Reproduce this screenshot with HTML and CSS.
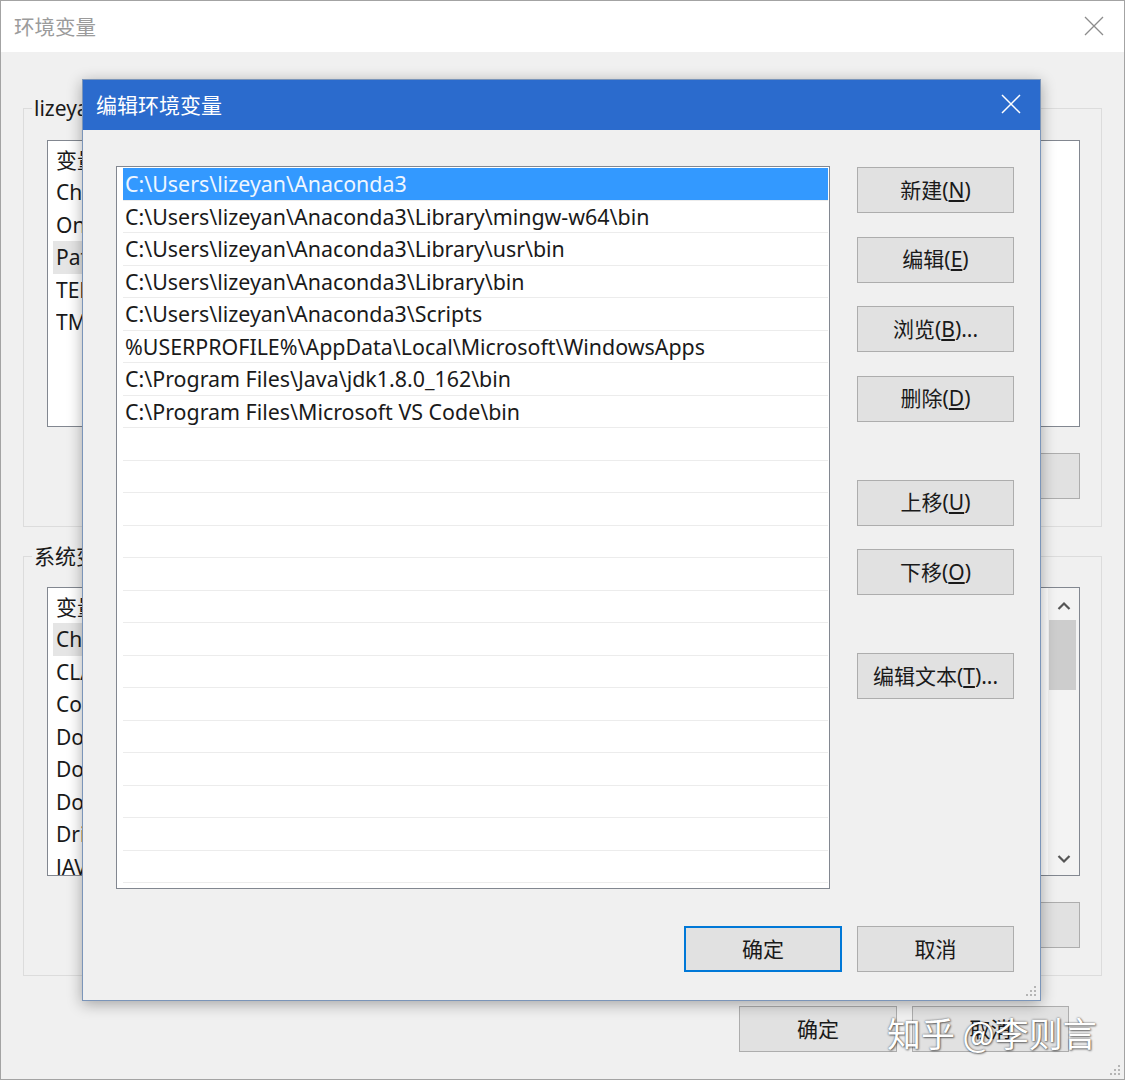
FILE: index.html
```html
<!DOCTYPE html>
<html lang="zh-CN">
<head>
<meta charset="utf-8">
<title>编辑环境变量</title>
<link rel="stylesheet" href="styles.css">
</head>
<body>
<div class="win">
  <div class="win-title">
    <span>环境变量</span>
    <svg class="x-icon" width="20" height="20" viewBox="0 0 20 20"><path d="M1 1 L19 19 M19 1 L1 19" stroke="#8c8c8c" stroke-width="1.3" fill="none"/></svg>
  </div>
  <div class="win-body">
    <fieldset class="group g1">
      <legend>lizeyan 的用户变量(U)</legend>
      <div class="lv lv1">
        <div class="lv-items">
          <div class="lv-head"><span class="c1">变量</span><span>值</span></div>
          <div class="lv-row"><span class="c1">ChocolateyLastPathUpdate</span><span>132234567890123456</span></div>
          <div class="lv-row"><span class="c1">OneDrive</span><span>C:\Users\lizeyan\OneDrive</span></div>
          <div class="lv-row hl"><span class="c1">Path</span><span>C:\Users\lizeyan\Anaconda3;C:\Users\lizeyan\...</span></div>
          <div class="lv-row"><span class="c1">TEMP</span><span>%USERPROFILE%\AppData\Local\Temp</span></div>
          <div class="lv-row"><span class="c1">TMP</span><span>%USERPROFILE%\AppData\Local\Temp</span></div>
        </div>
      </div>
      <div class="btnrow">
        <button class="btn">新建(<u>N</u>)...</button>
        <button class="btn">编辑(<u>E</u>)...</button>
        <button class="btn">删除(<u>D</u>)</button>
      </div>
    </fieldset>
    <fieldset class="group g2">
      <legend>系统变量(S)</legend>
      <div class="lv lv2">
        <div class="lv-items">
          <div class="lv-head"><span class="c1">变量</span><span>值</span></div>
          <div class="lv-row hl"><span class="c1">ChocolateyInstall</span><span>C:\ProgramData\chocolatey</span></div>
          <div class="lv-row"><span class="c1">CLASSPATH</span><span>.;%JAVA_HOME%\lib</span></div>
          <div class="lv-row"><span class="c1">ComSpec</span><span>C:\WINDOWS\system32\cmd.exe</span></div>
          <div class="lv-row"><span class="c1">DokanLibrary1</span><span>C:\Program Files\Dokan\</span></div>
          <div class="lv-row"><span class="c1">DokanLibrary1_LibraryPath_x64</span><span>C:\Program Files\Dokan\</span></div>
          <div class="lv-row"><span class="c1">DokanLibrary1_LibraryPath_x86</span><span>C:\Program Files (x86)\</span></div>
          <div class="lv-row"><span class="c1">DriverData</span><span>C:\Windows\System32\Drivers</span></div>
          <div class="lv-row"><span class="c1">JAVA_HOME</span><span>C:\Program Files\Java\jdk1.8.0_162</span></div>
        </div>
        <div class="vscroll">
          <div class="arrow up"><svg width="14" height="10" viewBox="0 0 14 10"><path d="M1.5 8 L7 2.5 L12.5 8" stroke="#555" stroke-width="2.2" fill="none"/></svg></div>
          <div class="thumb"></div>
          <div class="track"></div>
          <div class="arrow"><svg width="14" height="10" viewBox="0 0 14 10"><path d="M1.5 2 L7 7.5 L12.5 2" stroke="#555" stroke-width="2.2" fill="none"/></svg></div>
        </div>
      </div>
      <div class="btnrow">
        <button class="btn">新建(<u>W</u>)...</button>
        <button class="btn">编辑(<u>I</u>)...</button>
        <button class="btn">删除(<u>L</u>)</button>
      </div>
    </fieldset>
    <div class="win-foot">
      <button class="btn btn-w158">确定</button>
      <button class="btn">取消</button>
    </div>
  </div>
  <svg class="grip grip-win" width="12" height="12" viewBox="0 0 12 12"><g fill="#b5b5b5"><rect x="9" y="1" width="2" height="2"/><rect x="5" y="5" width="2" height="2"/><rect x="9" y="5" width="2" height="2"/><rect x="1" y="9" width="2" height="2"/><rect x="5" y="9" width="2" height="2"/><rect x="9" y="9" width="2" height="2"/></g></svg>

  <div class="watermark">知乎 @李则言</div>

  <div class="dlg">
    <div class="dlg-title">
      <span>编辑环境变量</span>
      <svg class="x-icon" width="20" height="20" viewBox="0 0 20 20"><path d="M1 1 L19 19 M19 1 L1 19" stroke="#ffffff" stroke-width="1.5" fill="none"/></svg>
    </div>
    <div class="dlg-body">
      <div class="dlg-main">
        <div class="plist">
          <div class="prow sel">C:\Users\lizeyan\Anaconda3</div>
          <div class="prow">C:\Users\lizeyan\Anaconda3\Library\mingw-w64\bin</div>
          <div class="prow">C:\Users\lizeyan\Anaconda3\Library\usr\bin</div>
          <div class="prow">C:\Users\lizeyan\Anaconda3\Library\bin</div>
          <div class="prow">C:\Users\lizeyan\Anaconda3\Scripts</div>
          <div class="prow">%USERPROFILE%\AppData\Local\Microsoft\WindowsApps</div>
          <div class="prow">C:\Program Files\Java\jdk1.8.0_162\bin</div>
          <div class="prow">C:\Program Files\Microsoft VS Code\bin</div>
          <div class="prow"></div><div class="prow"></div><div class="prow"></div><div class="prow"></div>
          <div class="prow"></div><div class="prow"></div><div class="prow"></div><div class="prow"></div>
          <div class="prow"></div><div class="prow"></div><div class="prow"></div><div class="prow"></div>
          <div class="prow"></div><div class="prow"></div>
        </div>
        <div class="btncol">
          <button class="btn">新建(<u>N</u>)</button>
          <button class="btn">编辑(<u>E</u>)</button>
          <button class="btn">浏览(<u>B</u>)...</button>
          <button class="btn">删除(<u>D</u>)</button>
          <button class="btn sep">上移(<u>U</u>)</button>
          <button class="btn">下移(<u>O</u>)</button>
          <button class="btn sep">编辑文本(<u>T</u>)...</button>
        </div>
      </div>
      <div class="dlg-foot">
        <button class="btn btn-default">确定</button>
        <button class="btn">取消</button>
      </div>
    </div>
    <svg class="grip grip-dlg" width="12" height="12" viewBox="0 0 12 12"><g fill="#b5b5b5"><rect x="9" y="1" width="2" height="2"/><rect x="5" y="5" width="2" height="2"/><rect x="9" y="5" width="2" height="2"/><rect x="1" y="9" width="2" height="2"/><rect x="5" y="9" width="2" height="2"/><rect x="9" y="9" width="2" height="2"/></g></svg>
  </div>
</div>
</body>
</html>
```

FILE: styles.css
```css
* { box-sizing: border-box; }
html, body { margin: 0; padding: 0; }
body {
  font-family: "Noto Sans", "Noto Sans CJK SC", sans-serif;
  font-size: 21px;
  color: #1a1a1a;
  background: #f0f0f0;
}
.win {
  position: relative;
  width: 1125px;
  height: 1080px;
  border: 1px solid #a3a3a3;
  background: #f0f0f0;
  overflow: hidden;
}
.win-title {
  height: 51px;
  background: #ffffff;
  display: flex;
  align-items: center;
  justify-content: space-between;
  padding: 0 20px 2px 13px;
  color: #9b9b9b;
  font-family: "Noto Sans CJK SC", sans-serif;
  font-size: 20.5px;
}
.win-body {
  padding: 43px 22px 0 22px;
}
.group {
  margin: 0;
  border: 1px solid #dcdcdc;
  min-width: 0;
}
.group legend {
  margin-left: -15px;
  padding: 0 2px;
  line-height: 26px;
  color: #1a1a1a;
}
.g1 { padding: 0 21px 27px 23px; }
.g2 { margin-top: 16px; padding: 0 21px 27px 23px; }
.lv {
  background: #fff;
  border: 1px solid #828790;
  overflow: hidden;
  display: flex;
}
.lv1 { margin-top: 19px; height: 287px; }
.lv2 { margin-top: 18px; height: 289px; }
.lv-items { flex: 1; min-width: 0; padding-top: 1px; }
.lv-head {
  height: 34px;
  display: flex;
  align-items: center;
  padding-left: 8px;
  white-space: nowrap;
}
.lv-row {
  width: 940px;
  height: 32.5px;
  line-height: 32.5px;
  margin-left: 5px;
  padding-left: 3px;
  display: flex;
  white-space: nowrap;
  overflow: hidden;
}
.c1 { width: 330px; flex: none; overflow: hidden; }
.lv-head .c1 { width: 333px; }
.lv-row.hl { background: #e5e5e5; }
.vscroll {
  width: 31px;
  flex: none;
  background: #f3f3f3;
  display: flex;
  flex-direction: column;
}
.vscroll .arrow {
  height: 32px;
  display: flex;
  align-items: center;
  justify-content: center;
}
.vscroll .arrow.up { padding-top: 4px; }
.vscroll .thumb {
  height: 70px;
  margin: 0 3px 0 1px;
  background: #cdcdcd;
}
.vscroll .track { flex: 1; }
.btnrow {
  margin-top: 26px;
  display: flex;
  justify-content: flex-end;
  gap: 15px;
}
.btn {
  width: 157px;
  height: 46px;
  background: #e1e1e1;
  border: 1px solid #adadad;
  font-family: "Noto Sans", "Noto Sans CJK SC", sans-serif;
  font-size: 21px;
  color: #1a1a1a;
  padding: 0;
  margin: 0;
  line-height: 1;
}
.btn u { text-underline-offset: 2px; }
.btn-w158 { width: 158px; }
.win-foot {
  margin-top: 30px;
  display: flex;
  justify-content: flex-end;
  gap: 15px;
  padding-right: 33px;
}
.grip { position: absolute; }
.grip-win { right: 3px; bottom: 3px; }
.grip-dlg { right: 3px; bottom: 3px; }
.watermark {
  position: absolute;
  left: 886px;
  top: 1008px;
  font-family: "Noto Sans CJK SC", sans-serif;
  font-size: 34px;
  line-height: 48px;
  color: #ffffff;
  white-space: nowrap;
  text-shadow: 0 0 2px rgba(0,0,0,0.65), 1px 1px 2px rgba(0,0,0,0.45);
}
.dlg {
  position: absolute;
  left: 81px;
  top: 78px;
  width: 959px;
  height: 922px;
  border: 1px solid #7b95b9;
  background: #f0f0f0;
  box-shadow: 0 3px 14px rgba(0,0,0,0.32);
}
.dlg-title {
  height: 50px;
  background: #2b6bcd;
  color: #ffffff;
  display: flex;
  align-items: center;
  justify-content: space-between;
  padding: 0 19px 2px 13px;
  font-family: "Noto Sans CJK SC", sans-serif;
  font-size: 21px;
}
.dlg-body {
  padding: 36px 26px 0 33px;
}
.dlg-main {
  display: flex;
  gap: 27px;
}
.plist {
  width: 714px;
  height: 723px;
  flex: none;
  background: #fff;
  border: 1px solid #828790;
  padding: 1px 1px 0 6px;
  overflow: hidden;
  font-size: 21.4px;
}
.prow {
  height: 32.5px;
  line-height: 32.5px;
  border-bottom: 1px solid #ececec;
  padding-left: 2px;
  white-space: nowrap;
}
.prow.sel {
  background: #3399ff;
  color: #eef6ff;
}
.btncol {
  display: flex;
  flex-direction: column;
  gap: 23.5px;
  padding-top: 1px;
}
.btncol .sep { margin-top: 34.5px; }
.dlg-foot {
  margin-top: 37px;
  display: flex;
  justify-content: flex-end;
  gap: 15px;
}
.btn-default {
  width: 158px;
  border: 2px solid #0078d7;
}
```
